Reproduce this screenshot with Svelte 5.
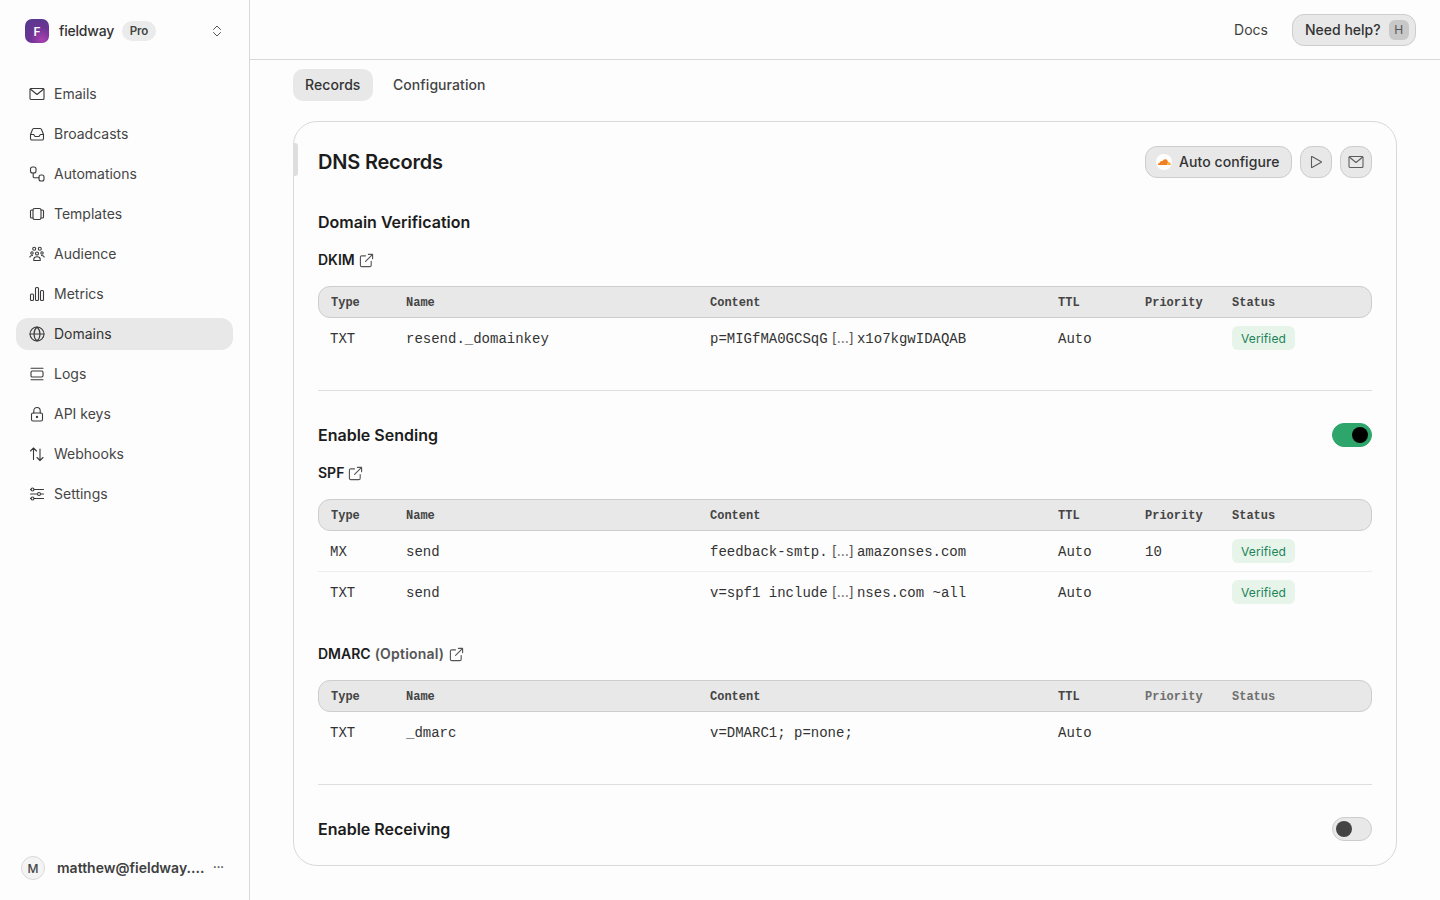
<script>
  const nav = [
    ['Emails', 'mail'], ['Broadcasts', 'inbox'], ['Automations', 'auto'], ['Templates', 'tpl'],
    ['Audience', 'aud'], ['Metrics', 'met'], ['Domains', 'dom'], ['Logs', 'logs'],
    ['API keys', 'key'], ['Webhooks', 'hook'], ['Settings', 'set']
  ];
</script>

{#snippet icon(k)}
  <svg class="ic" viewBox="0 0 16 16" fill="none" stroke="currentColor" stroke-width="1.1" stroke-linecap="round" stroke-linejoin="round">
    {#if k === 'mail'}
      <rect x="1" y="2.5" width="14" height="11" rx="1" /><path d="M1.3 3l6.7 5.5L14.7 3" />
    {:else if k === 'inbox'}
      <path d="M1.500 8.500L3.500 3.500a1.500 1.500 0 0 1 1.300-1h6.400a1.500 1.500 0 0 1 1.300 1l2 5v4a1.500 1.500 0 0 1-1.500 1.500H3a1.500 1.500 0 0 1-1.500-1.500z" /><path d="M1.500 8.500h3.200l1.300 2h4l1.300-2h3.200" />
    {:else if k === 'auto'}
      <rect x="1.500" y="1" width="5.500" height="6" rx="2" /><rect x="10" y="9" width="5" height="6" rx="2" /><path d="M4.200 7v3.500a1.200 1.200 0 0 0 1.200 1.200H10" />
    {:else if k === 'tpl'}
      <rect x="4" y="2.500" width="8" height="11" rx="1.500" /><path d="M4 4H2.500a1 1 0 0 0-1 1v6a1 1 0 0 0 1 1H4M12 4h1.500a1 1 0 0 1 1 1v6a1 1 0 0 1-1 1H12" />
    {:else if k === 'aud'}
      <circle cx="5.200" cy="2.800" r="1.500" /><circle cx="10.800" cy="2.800" r="1.500" /><circle cx="8" cy="7.500" r="1.500" /><circle cx="3" cy="7" r="1.200" /><circle cx="13" cy="7" r="1.200" /><path d="M.8 11c.3-1 1.200-1.500 2.700-1.500M15.200 11c-.3-1-1.200-1.500-2.700-1.500M4.800 14.500v-1.200c0-1.700 1.200-2.600 3.200-2.600s3.200.9 3.200 2.600v1.200z" />
    {:else if k === 'met'}
      <rect x="1.500" y="8" width="3" height="6.500" rx="1" /><rect x="6.500" y="1.500" width="3" height="13" rx="1" /><rect x="11.500" y="4.500" width="3" height="10" rx="1" />
    {:else if k === 'dom'}
      <circle cx="8" cy="8" r="7" /><path d="M1 8h14M8 1c-4 3.500-4 10.500 0 14M8 1c4 3.500 4 10.500 0 14" />
    {:else if k === 'logs'}
      <path d="M2 2.200h12M2 13.800h12" /><rect x="2" y="5" width="12" height="6" rx="1.200" />
    {:else if k === 'key'}
      <rect x="2.500" y="7" width="11" height="8" rx="1.500" /><path d="M4.800 7V4.700a3.200 3.200 0 0 1 6.400 0V7" /><circle cx="8" cy="11" r=".6" fill="currentColor" />
    {:else if k === 'hook'}
      <path d="M4.500 13.500V2M1.500 5l3-3 3 3M11 3v11.500M8 11.500l3 3 3-3" />
    {:else}
      <path d="M5 3.500h9.500M1.500 3.500H2M12 8h2.500M1.500 8H8M5 12.500h9.500M1.500 12.500H2" /><circle cx="3.500" cy="3.500" r="1.500" /><circle cx="10" cy="8" r="1.500" /><circle cx="3.500" cy="12.500" r="1.500" />
    {/if}
  </svg>
{/snippet}

{#snippet ext()}
  <svg class="ext" viewBox="0 0 16 16" fill="none" stroke="currentColor" stroke-width="1.200" stroke-linecap="round" stroke-linejoin="round">
    <path d="M7 3H3a1.500 1.500 0 0 0-1.500 1.500V13A1.500 1.500 0 0 0 3 14.500h8.500A1.500 1.500 0 0 0 13 13V9" /><path d="M7 9l7.500-7.500M10 1.500h4.500V6" />
  </svg>
{/snippet}

{#snippet thead(dim)}
  <div class="row head">
    <span>Type</span><span>Name</span><span>Content</span><span>TTL</span>
    <span class:dim>Priority</span><span class:dim>Status</span>
  </div>
{/snippet}

{#snippet rec(type, name, a, b, prio, verified, line)}
  <div class="row body" class:line>
    <span class="c">{type}</span><span class="c">{name}</span>
    <span class="content">{a}{#if b}<i>[…]</i>{b}{/if}</span>
    <span class="c">Auto</span><span class="c">{prio}</span>
    <span>{#if verified}<em class="badge">Verified</em>{/if}</span>
  </div>
{/snippet}

<div class="app">
  <aside class="side">
    <div class="brand">
      <div class="logo">F</div>
      <span class="bname">fieldway</span>
      <span class="pro">Pro</span>
      <svg class="chev" viewBox="0 0 10 12" fill="none" stroke="currentColor" stroke-width="1" stroke-linecap="round" stroke-linejoin="round"><path d="M1.500 4.500L5 1l3.500 3.500M1.500 7.500L5 11l3.500-3.500" /></svg>
    </div>
    <nav class="nav">
      {#each nav as [label, k]}
        <div class="item" class:on={label === 'Domains'}>
          {@render icon(k)}
          <span>{label}</span>
        </div>
      {/each}
    </nav>
    <div class="user">
      <div class="avatar">M</div>
      <span class="mail">matthew@fieldway....</span>
      <span class="more">···</span>
    </div>
  </aside>

  <div class="main">
    <header class="top">
      <span class="docs">Docs</span>
      <div class="help"><span>Need help?</span><kbd>H</kbd></div>
    </header>

    <div class="page">
      <div class="tabs">
        <span class="tab on"><span>Records</span></span>
        <span class="tab"><span>Configuration</span></span>
      </div>

      <section class="card">
        <div class="notch"></div>
        <div class="cardhead">
          <h1>DNS Records</h1>
          <div class="actions">
            <div class="btn">
              <span class="cf">
                <svg viewBox="0 0 16 16"><path d="M2 11c-.2-1.200.6-2.200 1.700-2.300C4.200 7.300 5.400 6.800 6.400 7.300 7 5.700 8.400 5 9.700 5.300c1.300.3 2.100 1.300 2.300 2.600l-.8 3.100z" fill="#f38020" /><path d="M11.400 11l.5-1.700c.1-.4 0-.6-.4-.6l.7-.6c1.300-.1 2.500.8 2.800 2.900z" fill="#faae40" /></svg>
              </span>
              <span class="lbl">Auto configure</span>
            </div>
            <div class="sq">
              <svg viewBox="0 0 16 16" fill="none" stroke="currentColor" stroke-width="1.100" stroke-linejoin="round"><path d="M3.500 2.800v10.400a.3.3 0 0 0 .45.25L13.300 8.300a.35.35 0 0 0 0-.6L3.950 2.550a.3.3 0 0 0-.45.25z" /></svg>
            </div>
            <div class="sq">
              <svg viewBox="0 0 16 16" fill="none" stroke="currentColor" stroke-width="1.100" stroke-linejoin="round" stroke-linecap="round"><rect x="1" y="2.500" width="14" height="11" rx="1" /><path d="M1.300 3L8 8.500 14.700 3" /></svg>
            </div>
          </div>
        </div>

        <h2 class="dv">Domain Verification</h2>
        <h3 class="h3 dk">DKIM {@render ext()}</h3>
        <div class="table">
          {@render thead(false)}
          {@render rec('TXT', 'resend._domainkey', 'p=MIGfMA0GCSqG', 'x1o7kgwIDAQAB', '', true, false)}
        </div>

        <hr class="hr1" />

        <div class="sect">
          <h2>Enable Sending</h2>
          <div class="toggle yes"><b></b></div>
        </div>
        <h3 class="h3 sp">SPF {@render ext()}</h3>
        <div class="table">
          {@render thead(false)}
          {@render rec('MX', 'send', 'feedback-smtp.', 'amazonses.com', '10', true, true)}
          {@render rec('TXT', 'send', 'v=spf1 include', 'nses.com ~all', '', true, false)}
        </div>

        <h3 class="h3 dm">DMARC <small>(Optional)</small> {@render ext()}</h3>
        <div class="table">
          {@render thead(true)}
          {@render rec('TXT', '_dmarc', 'v=DMARC1; p=none;', '', '', false, false)}
        </div>

        <hr class="hr2" />

        <div class="sect last">
          <h2>Enable Receiving</h2>
          <div class="toggle"><b></b></div>
        </div>
      </section>
    </div>
  </div>
</div>

<style>
  :global(body) {
    margin: 0;
    background: #fdfdfd;
    font-family: Inter, "Liberation Sans", sans-serif;
    color: #1c1c1c;
  }
  .app { display: flex; height: 900px; overflow: hidden; }
  .side {
    width: 250px; box-sizing: border-box; flex: none; height: 900px;
    border-right: 1px solid #d9d9d9;
    display: flex; flex-direction: column;
    padding: 0 16px;
  }
  .brand { display: flex; align-items: center; height: 24px; margin: 19px 0 35px 9px; }
  .logo {
    width: 24px; height: 24px; border-radius: 7px; color: #fff; font-size: 12px; font-weight: 600;
    display: flex; align-items: center; justify-content: center;
    background: radial-gradient(circle at 70% 85%, #a93fb0 0%, #6b3493 45%, #4f3a8e 100%);
  }
  .bname { margin: 0 0 1px 10px; font-size: 14px; font-weight: 500; letter-spacing: -0.2px; color: #333; width: 55px; white-space: nowrap; }
  .pro {
    margin-left: 8px; height: 20px; width: 34px; border-radius: 10px; background: #ebebeb;
    font-size: 11.5px; font-weight: 600; color: #444; display: flex; align-items: center; justify-content: center;
    padding-bottom: 1px; box-sizing: border-box;
  }
  .chev { width: 10px; height: 12px; margin-left: auto; margin-right: 11px; color: #555; }
  .nav { display: flex; flex-direction: column; gap: 8px; }
  .item {
    height: 32px; border-radius: 12px; display: flex; align-items: center; gap: 9px; padding-left: 13px;
    font-size: 14px; color: #454545;
  }
  .item span { margin-bottom: 1px; }
  .item.on { background: #e8e8e8; color: #333; }
  .ic { width: 16px; height: 16px; flex: none; color: #3a3a3a; }
  .user { margin-top: auto; margin-bottom: 20px; display: flex; align-items: center; padding-left: 5px; height: 24px; }
  .avatar {
    width: 24px; height: 24px; border-radius: 50%; box-sizing: border-box; border: 1px solid #d9d9d9;
    background: #f4f4f4; color: #444; font-size: 12px; font-weight: 500;
    display: flex; align-items: center; justify-content: center; flex: none;
  }
  .mail {
    margin: 0 0 1px 12px; width: 148px; font-size: 14px; font-weight: 600; color: #3f3f3f;
    white-space: nowrap; flex: none;
  }
  .more { margin: 0 0 1px 8px; font-size: 11px; font-weight: 700; color: #444; line-height: 1; }

  .main { flex: 1; min-width: 0; display: flex; flex-direction: column; }
  .top {
    height: 60px; box-sizing: border-box; border-bottom: 1px solid #d9d9d9; flex: none;
    display: flex; align-items: center; justify-content: flex-end; padding-right: 24px; gap: 24px;
  }
  .docs { font-size: 14px; color: #3f3f3f; }
  .help {
    width: 124px; height: 32px; box-sizing: border-box; border: 1px solid #cdcdcd; border-radius: 12px; background: #e8e8e8;
    display: flex; align-items: center; padding-left: 12px; font-size: 14px; color: #333; font-weight: 450;
  }
  kbd {
    margin-left: 8px; width: 20px; height: 20px; border-radius: 6px; background: #c8c8c8; color: #555;
    font: 400 12px Inter, sans-serif; display: flex; align-items: center; justify-content: center;
  }
  .page { padding: 9px 43px 0; }
  .tabs { display: flex; gap: 8px; height: 32px; }
  .tab {
    height: 32px; box-sizing: border-box; padding: 0 12px; border-radius: 10px; display: flex; align-items: center;
    font-size: 14px; font-weight: 500; color: #444; letter-spacing: 0.005em;
  }
  .tab span { margin-bottom: 1px; }
  .tab.on { background: #e8e8e8; color: #333; width: 80px; }
  .card {
    position: relative; margin-top: 20px; box-sizing: border-box; height: 745px;
    border: 1px solid #d9d9d9; border-radius: 24px; padding: 24px 24px 0;
  }
  .notch {
    position: absolute; left: -1px; top: 21px; width: 5px; height: 33px;
    background: #dedede; border-radius: 0 3px 3px 0;
  }
  .cardhead { display: flex; align-items: center; justify-content: space-between; height: 32px; }
  h1 { margin: 0; font-size: 20px; line-height: 28px; font-weight: 600; letter-spacing: -0.2px; color: #1c1c1c; }
  .actions { display: flex; gap: 8px; }
  .btn {
    height: 32px; box-sizing: border-box; width: 147px; border: 1px solid #cdcdcd; border-radius: 12px; background: #e8e8e8;
    display: flex; align-items: center; padding-left: 10px; gap: 7px; font-size: 14px; color: #333; font-weight: 450;
  }
  .lbl { margin-bottom: 1px; letter-spacing: 0.005em; }
  .cf { width: 16px; height: 16px; border-radius: 50%; background: #fff; display: flex; flex: none; }
  .cf svg { width: 16px; height: 16px; }
  .sq {
    width: 32px; height: 32px; box-sizing: border-box; border: 1px solid #cdcdcd; border-radius: 12px; background: #e8e8e8;
    display: flex; align-items: center; justify-content: center; color: #5c5c5c;
  }
  .sq svg { width: 16px; height: 16px; }
  h2 { margin: 0; font-size: 16px; line-height: 24px; font-weight: 600; color: #1c1c1c; }
  .dv { margin-top: 32px; }
  .h3 {
    margin: 0; font-size: 14px; line-height: 20px; font-weight: 600; color: #1c1c1c;
    display: flex; align-items: center; gap: 4px;
  }
  .h3 small { font-size: 14px; color: #555; font-weight: 600; letter-spacing: 0.2px; margin-right: 1px; }
  .ext { width: 15px; height: 15px; color: #555; }
  .dk { margin-top: 16px; }
  .sp { margin-top: 16px; }
  .dm { margin-top: 31px; }
  .table { margin-top: 16px; padding-bottom: 1px; }
  .row { display: grid; font-family: "Liberation Mono", monospace; align-items: center; }
  .head {
    height: 32px; box-sizing: border-box; border: 1px solid #cdcdcd; border-radius: 12px; background: #e8e8e8;
    font-size: 12px; font-weight: 700; color: #444; padding-left: 12px;
    grid-template-columns: 75px 304px 348px 87px 87px 1fr;
  }
  .head span { margin-top: 2px; }
  .head .dim { color: #6f6f6f; }
  .body {
    height: 40px; padding-left: 12px; font-size: 14px; color: #333;
    grid-template-columns: 76px 304px 348px 87px 87px 1fr;
  }
  .c { margin-top: 2px; }
  .body.line { border-bottom: 1px solid #ededed; }
  .content { display: flex; align-items: baseline; white-space: pre; }
  .content::before { content: "\200b"; font: 400 14px Inter, sans-serif; }
  .content i { font: 400 14px Inter, sans-serif; color: #555; margin: 0 3px 0 4px; font-style: normal; }
  .badge {
    display: inline-flex; align-items: center; justify-content: center; height: 24px; width: 63px; border-radius: 6px;
    vertical-align: top;
    background: #e6f4ea; color: #218358; font: 400 12px Inter, sans-serif; letter-spacing: 0.01em;
  }
  hr { border: 0; border-top: 1px solid #dedede; margin: 0; }
  .hr1 { margin-top: 31px; }
  .hr2 { margin-top: 31px; }
  .sect { display: flex; align-items: center; justify-content: space-between; height: 24px; margin-top: 32px; }
  .toggle {
    width: 40px; height: 24px; box-sizing: border-box; border-radius: 12px; border: 1px solid #cdcdcd; background: #e8e8e8;
    display: flex; align-items: center; padding-left: 3px;
  }
  .toggle b { width: 16px; height: 16px; border-radius: 50%; background: #444; display: block; }
  .toggle.yes { background: #2ea56b; border-color: #2ea56b; padding-left: 19px; }
  .toggle.yes b { background: #000; }
</style>
